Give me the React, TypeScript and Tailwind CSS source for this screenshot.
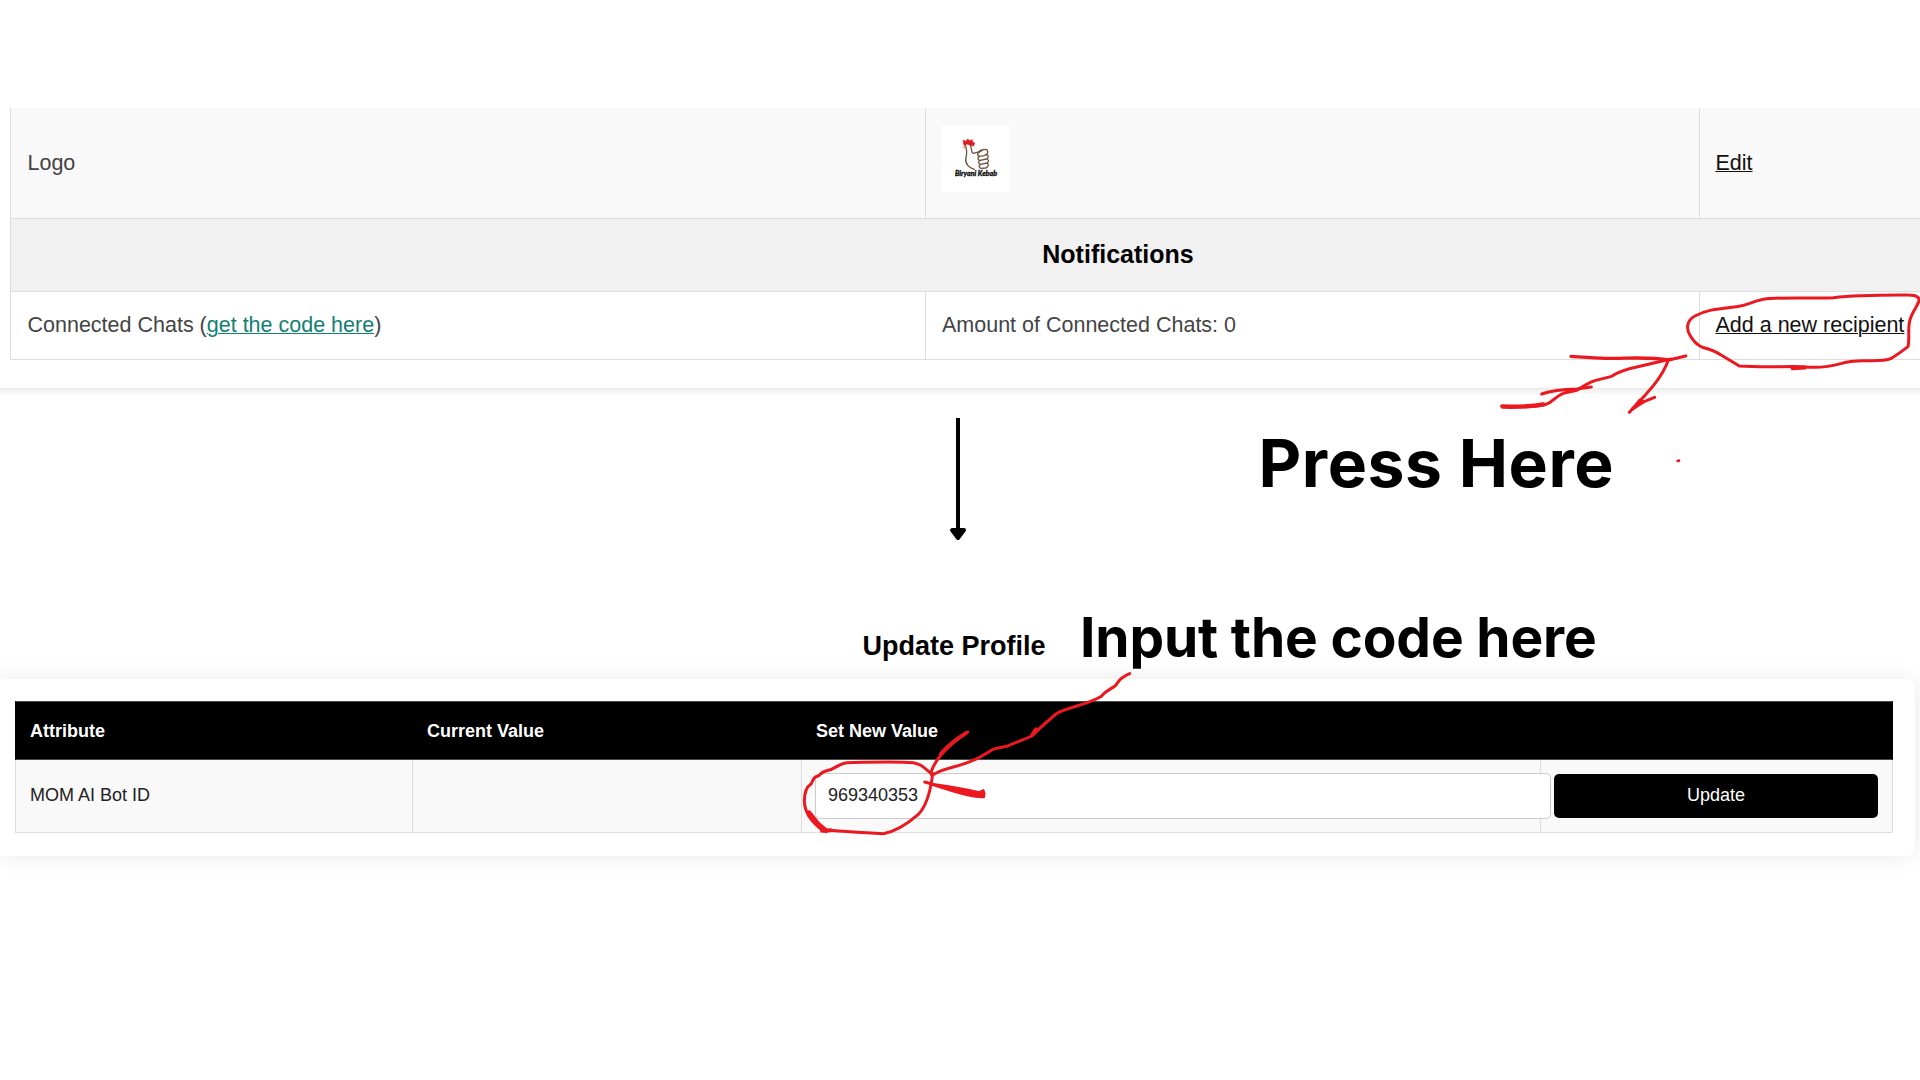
import React from "react";

const INK = "#eb191f";

function BrandMark() {
  return (
    <svg className="mb-[10px] block h-[67px] w-[67px] bg-white" viewBox="66 45 201 201" fill="none" strokeLinecap="round" strokeLinejoin="round">
      <path d="M131 102 L129 91 L138 94 L143 87 L149 92 L157 89 L157 96 L164 99 L161 108 L150 105 L140 102 L134 107 Z" fill="#e01b22" stroke="#e01b22" strokeWidth="2" />
      <path d="M134 108 L127 113 L135 116 Z" fill="#f0a640" />
      <g stroke="#6d5443" strokeWidth="4">
        <path d="M136 106 C142 121 141 131 138 143 C134 160 146 174 163 178" />
        <path d="M151 106 C157 117 152 127 160 130 C168 128 176 126 183 124" />
        <path d="M176 128 C178 119 199 116 202 121 C206 128 201 135 192 137 L178 139 C170 136 172 129 178 127" />
        <path d="M178 139 C171 144 174 151 181 151 L199 147 C207 143 206 135 199 134" />
        <path d="M181 151 C173 155 175 163 182 163 L201 159 C208 154 206 149 201 147" />
        <path d="M182 163 C175 167 177 173 183 175 L197 174 C206 171 206 163 202 160" />
      </g>
      <text x="105" y="198" textLength="126" lengthAdjust="spacingAndGlyphs" fontFamily="Lato, sans-serif" fontWeight="900" fontStyle="italic" fontSize="21" fill="#111" stroke="#111" strokeWidth="1">
        Biryani Kebab
      </text>
    </svg>
  );
}

function ProfileTable() {
  return (
    <section className="h-[304px] overflow-hidden">
      <div className="h-[280px] w-[2000px] -ml-5 pl-[30px] bg-white shadow-[0_1px_9px_rgba(0,0,0,0.14)]">
        <div className="w-[2215px] border-l border-b border-[#dddddd] text-[21.5px] leading-[32px] text-[#444444]">
          <div className="flex h-[110px] items-stretch bg-[#f9f9f9]">
            <div className="flex w-[914px] items-center pl-[16.5px]">Logo</div>
            <div className="flex w-[774px] items-center border-l border-[#dddddd] pl-4">
              <BrandMark />
            </div>
            <div className="flex items-center border-l border-[#dddddd] pl-[15.5px]">
              <a className="text-[#111111] underline decoration-1 underline-offset-1">Edit</a>
            </div>
          </div>
          <h3 className="flex h-[74px] items-center justify-center border-y border-[#dddddd] bg-[#f1f1f1] pb-[3px] text-[25px] font-bold text-black">
            Notifications
          </h3>
          <div className="flex h-[67px] items-stretch bg-white">
            <div className="flex w-[914px] items-center whitespace-pre pb-px pl-[16.5px]">
              Connected Chats (<a className="text-[#128071] underline decoration-1 underline-offset-1">get the code here</a>)
            </div>
            <div className="flex w-[774px] items-center border-l border-[#dddddd] pb-px pl-4">Amount of Connected Chats: 0</div>
            <div className="flex items-center border-l border-[#dddddd] pb-px pl-[15.5px]">
              <a className="text-[#111111] underline decoration-1 underline-offset-1">Add a new recipient</a>
            </div>
          </div>
        </div>
      </div>
    </section>
  );
}

function UpdateForm() {
  return (
    <section className="-ml-[5px] mr-[5px] h-[177px] rounded-[9px] bg-white pl-5 pt-[22px] shadow-[0_0_22px_rgba(0,0,0,0.09)]">
      <div className="w-[1878px] text-[18px] leading-[27px]">
        <div className="flex h-[59px] items-center border border-[#4a4a4a] border-x-black bg-black pt-[2px] font-bold text-white">
          <span className="w-[397px] pl-[14px]">Attribute</span>
          <span className="w-[389px] pl-[14px]">Current Value</span>
          <span className="pl-[14px]">Set New Value</span>
        </div>
        <div className="flex h-[73px] border-x border-b border-[#dddddd] bg-[#f9f9f9] text-[#222222]">
          <div className="flex w-[396px] items-center pb-[2px] pl-[14px]">MOM AI Bot ID</div>
          <div className="w-[389px] border-l border-[#dddddd]" />
          <div className="flex w-[739px] items-center border-l border-[#dddddd] pl-[13px]">
            <input
              className="relative h-[46px] w-[736px] shrink-0 rounded-[5px] border border-[#cccccc] bg-white pb-[2px] pl-[12px] outline-none"
              defaultValue="969340353"
            />
          </div>
          <div className="flex grow items-center border-l border-[#dddddd] pl-[13px]">
            <button className="h-[44px] w-[324px] rounded-[5px] bg-black pb-[2px] text-white">Update</button>
          </div>
        </div>
      </div>
    </section>
  );
}

function Annotations() {
  return (
    <svg className="pointer-events-none absolute inset-0" width="1920" height="1080" viewBox="0 0 1920 1080" fill="none" strokeLinecap="round" strokeLinejoin="round">
      <path d="M958 418 V530" stroke="#000" strokeWidth="4" strokeLinecap="butt" />
      <path d="M952 530 H964 L958 538 Z" fill="#000" stroke="#000" strokeWidth="4" />
      <g transform="translate(1480 270) scale(0.33333)" stroke={INK} strokeWidth="9">
        <path d="M1318 88 C1309 71 1290 76 1262 75 C1200 75 1120 76 1060 83 C990 86 900 80 850 88 C810 96 802 107 770 110 C720 116 680 118 645 138 C618 152 619 178 630 196 C640 214 652 225 665 231 C690 238 705 242 722 254 L778 288 C840 292 910 289 970 290 C1010 295 1050 290 1085 280 C1110 272 1130 272 1150 272 C1180 272 1215 274 1232 266 C1252 255 1268 242 1284 230 C1290 205 1282 175 1290 150 C1297 122 1315 108 1318 88 Z" />
        <path d="M937 295 L975 293" strokeWidth="11" />
        <path d="M273 259 C330 262 360 266 400 265 C450 265 510 260 567 270 L617 258" strokeWidth="10" />
        <path d="M65 408 C110 412 160 410 196 404 C220 398 222 380 250 370 L290 361 C310 348 325 338 345 332 L395 319 C420 302 450 295 480 289 L572 267" />
        <path d="M68 410 C110 411 150 411 190 403" strokeWidth="13" />
        <path d="M185 372 C220 360 250 358 290 357 L334 351" />
        <path d="M565 270 C548 318 520 350 448 427 C470 398 490 397 524 382" />
        <path d="M480 390 L458 417 L490 396 Z" fill={INK} />
        <path d="M593 573 L597 572" strokeWidth="8" />
      </g>
      <g transform="translate(780 660) scale(0.33333)" stroke={INK} strokeWidth="9">
        <path d="M1049 41 C1012 57 1018 65 1004 79 C985 91 975 94 964 109 C920 137 860 140 828 162 L790 195 C775 208 770 217 755 228 C725 242 710 246 680 259 C665 262 650 263 635 270 C610 286 600 293 570 305 C530 322 490 324 462 343 L453 338 C465 295 510 252 563 216" />
        <path d="M768 208 L758 223" strokeWidth="12" />
        <path d="M482 282 C505 255 530 236 560 218" strokeWidth="11" />
        <path d="M453 340 C430 322 425 313 400 308 C350 304 250 307 200 308 C175 311 165 327 145 331 C120 336 122 345 114 348 C95 352 101 364 92 373 C76 383 73 405 73 425 C75 455 88 480 128 511 C175 511 225 519 310 521 C345 515 385 489 415 463 C440 438 450 400 457 350 Z" />
        <path d="M87 458 L116 494 L138 512" strokeWidth="14" />
        <path d="M126 512 L152 511" strokeWidth="12" />
        <path d="M434 366 L457 372" />
        <path d="M450 371 C500 378 550 386 598 397 L610 391 L613 400 L612 411 C580 413 530 398 456 374 Z" fill={INK} strokeWidth="7" />
      </g>
    </svg>
  );
}

export default function App() {
  return (
    <main className="relative h-[1080px] w-[1920px] overflow-hidden bg-white pt-[108px] font-['Liberation_Sans',Arial,sans-serif]">
      <ProfileTable />
      <p className="ml-[1258.5px] mt-[7px] whitespace-nowrap font-[Inter,sans-serif] text-[66px] font-bold leading-[88px] tracking-[0.55px] text-black">Press Here</p>
      <div className="mt-[91px] flex h-[81px] items-start">
        <h2 className="ml-[862.5px] mt-[28px] w-[217.5px] text-[27px] font-bold leading-[40px] text-black">Update Profile</h2>
        <p className="mt-px whitespace-nowrap font-[Inter,sans-serif] text-[55px] font-bold leading-[76px] tracking-[-0.15px] text-black">Input the code here</p>
      </div>
      <UpdateForm />
      <Annotations />
    </main>
  );
}
